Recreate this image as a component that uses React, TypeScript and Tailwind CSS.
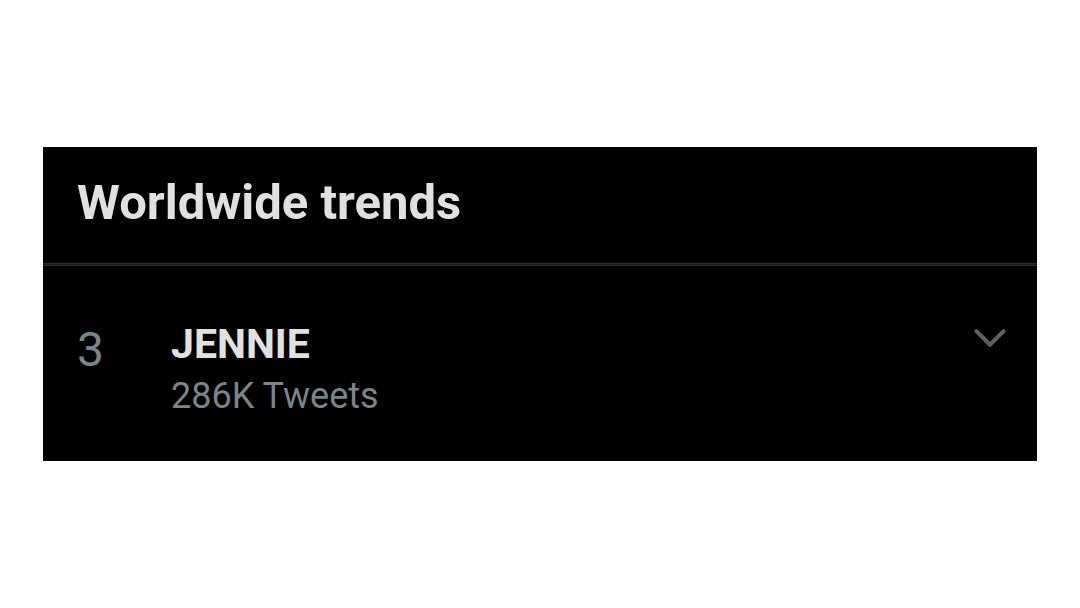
import { ChevronDown } from "lucide-react";

export default function App() {
  return (
    <div className="w-[1080px] h-[608px] bg-white pt-[147px] pl-[43px] font-['Roboto',sans-serif]">
      <div className="w-[994px] h-[314px] bg-black flex flex-col">
        {/* Header */}
        <div className="h-[116px] pl-[34px] pt-[31px]">
          <h1 className="text-[49px] font-bold text-[#e1e1e1] leading-none">Worldwide trends</h1>
        </div>
        <div className="h-[1px] bg-[#2c2f31]" />
        <div className="h-[1px] bg-[#151718]" />
        <div className="h-[1px] bg-[#2c2f31]" />

        {/* Trend row */}
        <div className="flex items-start pl-[34px] pr-[20px]">
          <span className="w-[94px] mt-[60px] text-[48px] leading-none text-[#7b8488]">3</span>
          <div className="flex flex-col mt-[56px]">
            <span className="text-[41px] font-bold text-[#e1e1e1] leading-[44px]">JENNIE</span>
            <span className="text-[36px] text-[#7b8488] leading-[44px] mt-[8px]">286K Tweets</span>
          </div>
          <ChevronDown className="ml-auto mt-[45px] w-[54px] h-[54px] text-[#5b6164]" strokeWidth={1.8} />
        </div>
      </div>
    </div>
  );
}
